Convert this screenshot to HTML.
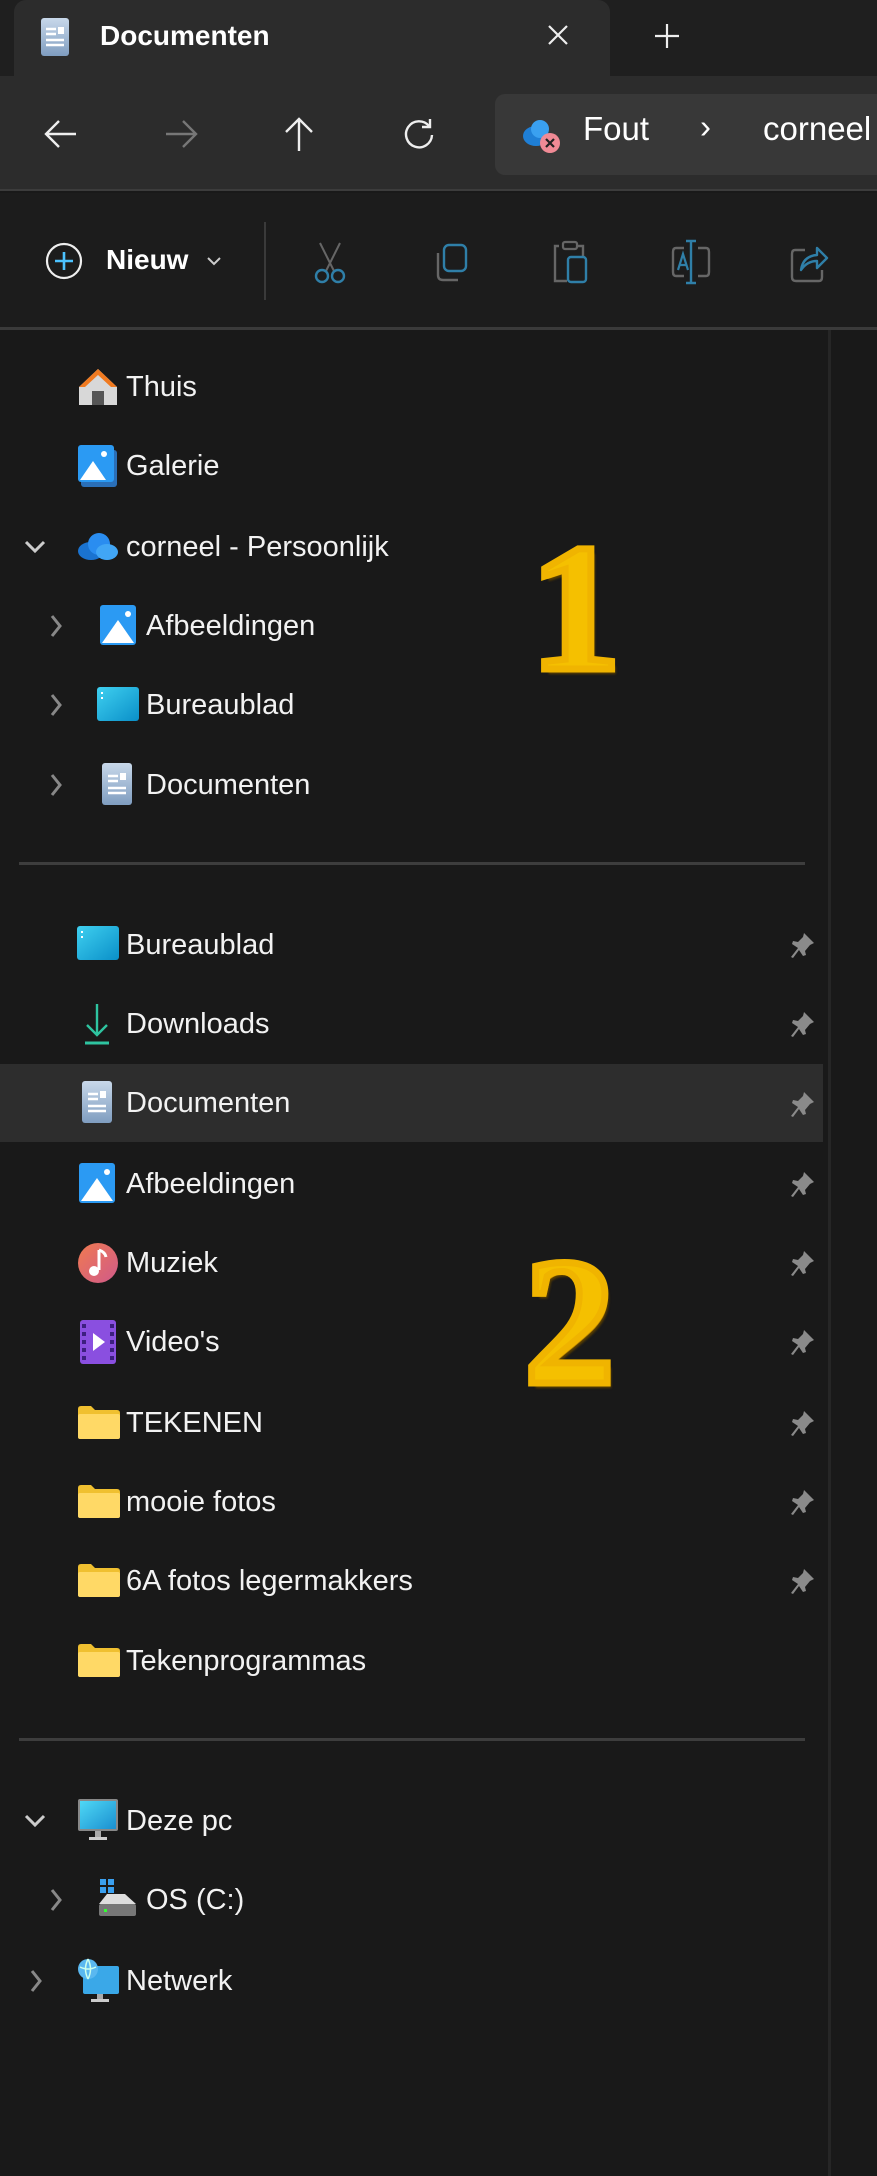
<!DOCTYPE html>
<html><head><meta charset="utf-8">
<style>
*{margin:0;padding:0;box-sizing:border-box}
html,body{width:877px;height:2176px;overflow:hidden;background:#191919;font-family:"Segoe UI","Liberation Sans",sans-serif;color:#fff}
.abs{position:absolute}
#tabbar{left:0;top:0;width:877px;height:76px;background:#1f1f1f}
#tab{left:14px;top:0;width:596px;height:80px;background:#2c2c2c;border-radius:12px 12px 0 0}
#nav{left:0;top:76px;width:877px;height:115px;background:#2c2c2c;border-bottom:2px solid #3c3c3c}
#addr{left:495px;top:18px;width:400px;height:81px;background:#383838;border-radius:10px}
#tool{left:0;top:193px;width:877px;height:137px;background:#1c1c1c;border-bottom:3px solid #3a3a3a}
.row{position:absolute;left:0;height:80px;width:823px;line-height:80px;font-size:29px;color:#f2f2f2}
.row span.t{position:absolute;top:0}
.row svg{position:absolute}
.pin{position:absolute;left:790px;top:26px}
.chev{position:absolute;top:28px}
.sep{position:absolute;left:19px;width:786px;height:3px;background:#3d3d3d}
.big{position:absolute;font-family:"Liberation Serif",serif;font-weight:bold;color:#f5c000;-webkit-text-stroke:7px #f0b400;
text-shadow:-2px -2px 0 #ffe070,3px 3px 0 #b88400,4px 5px 2px #5a3f00}
</style></head><body>
<div id="tabbar" class="abs"></div>
<div id="tab" class="abs">
 <svg class="abs" style="left:26px;top:17px" width="30" height="40" viewBox="0 0 30 40"><defs><linearGradient id="g1" x1="0" y1="0" x2="0" y2="1"><stop offset="0" stop-color="#c8d8ea"/><stop offset="1" stop-color="#7f9dc0"/></linearGradient></defs><rect x="1" y="1" width="28" height="38" rx="3" fill="url(#g1)"/><path d="M6 12h10M6 17h10M6 23h18M6 28h18" stroke="#fff" stroke-width="2.5"/><rect x="18" y="10" width="6" height="7" fill="#fff"/></svg>
 <span class="abs" style="left:86px;top:20px;font-size:28px;font-weight:600;color:#fff">Documenten</span>
 <svg class="abs" style="left:533px;top:24px" width="22" height="22"><path d="M2 2L20 20M20 2L2 20" stroke="#eee" stroke-width="2.2"/></svg>
</div>
<svg class="abs" style="left:654px;top:23px" width="26" height="26"><path d="M13 1V25M1 13H25" stroke="#eee" stroke-width="2.2"/></svg>
<div id="nav" class="abs">
 <svg class="abs" style="left:44px;top:43px" width="34" height="30"><path d="M32 15H3M15 2L2 15L15 28" stroke="#eee" stroke-width="2.4" fill="none"/></svg>
 <svg class="abs" style="left:164px;top:43px" width="34" height="30"><path d="M2 15H31M19 2L32 15L19 28" stroke="#777" stroke-width="2.4" fill="none"/></svg>
 <svg class="abs" style="left:284px;top:40px" width="30" height="36"><path d="M15 35V3M2 16L15 3L28 16" stroke="#eee" stroke-width="2.4" fill="none"/></svg>
 <svg class="abs" style="left:402px;top:41px" width="34" height="34"><path d="M27 9A13 13 0 1 0 30 18" stroke="#eee" stroke-width="2.4" fill="none"/><path d="M28 2V10H20" stroke="#eee" stroke-width="2.4" fill="none"/></svg>
 <div id="addr" class="abs">
  <svg class="abs" style="left:25px;top:22px" width="44" height="40"><ellipse cx="16" cy="20" rx="13" ry="10" fill="#1f7fd6"/><circle cx="20" cy="13" r="9" fill="#3aa0f0"/><circle cx="30" cy="27" r="10" fill="#f08a95"/><path d="M26 23L34 31M34 23L26 31" stroke="#222" stroke-width="2.2"/></svg>
  <span class="abs" style="left:88px;top:16px;font-size:33px;color:#fff">Fout</span>
  <span class="abs" style="left:205px;top:14px;font-size:33px;color:#fff">›</span>
  <span class="abs" style="left:268px;top:16px;font-size:33px;color:#fff">corneel</span>
 </div>
</div>
<div id="tool" class="abs">
 <svg class="abs" style="left:45px;top:49px" width="38" height="38"><circle cx="19" cy="19" r="17" stroke="#eee" stroke-width="2.2" fill="none"/><path d="M19 10V28M10 19H28" stroke="#4cc2ff" stroke-width="2.6"/></svg>
 <span class="abs" style="left:106px;top:51px;font-size:28px;font-weight:600;color:#fff">Nieuw</span>
 <svg class="abs" style="left:206px;top:63px" width="16" height="10"><path d="M2 2L8 8L14 2" stroke="#ccc" stroke-width="2" fill="none"/></svg>
 <div class="abs" style="left:264px;top:29px;width:2px;height:78px;background:#3a3a3a"></div>
 <svg class="abs" style="left:312px;top:48px" width="36" height="44"><path d="M8 2L22 30M28 2L14 30" stroke="#666" stroke-width="2"/><circle cx="10" cy="35" r="6" stroke="#2f7fa8" stroke-width="2.4" fill="none"/><circle cx="26" cy="35" r="6" stroke="#2f7fa8" stroke-width="2.4" fill="none"/></svg>
 <svg class="abs" style="left:432px;top:50px" width="38" height="40"><rect x="12" y="2" width="22" height="26" rx="5" stroke="#2f7fa8" stroke-width="2.4" fill="none"/><path d="M6 10V32Q6 37 11 37H26" stroke="#666" stroke-width="2.4" fill="none"/></svg>
 <svg class="abs" style="left:551px;top:46px" width="38" height="46"><path d="M8 7H4V42H16" stroke="#666" stroke-width="2.4" fill="none"/><rect x="12" y="3" width="14" height="7" rx="2" stroke="#666" stroke-width="2.2" fill="none"/><path d="M26 7H32V17" stroke="#666" stroke-width="2.4" fill="none"/><rect x="17" y="18" width="18" height="25" rx="3" stroke="#2f7fa8" stroke-width="2.4" fill="none"/></svg>
 <svg class="abs" style="left:670px;top:46px" width="42" height="46"><path d="M14 9H6Q3 9 3 13V33Q3 37 6 37H14M28 9H36Q39 9 39 13V33Q39 37 36 37H28" stroke="#666" stroke-width="2.4" fill="none"/><path d="M21 2V44M16 2H26M16 44H26" stroke="#2f7fa8" stroke-width="2.4"/><path d="M8 31L13 15L18 31M10 26H16" stroke="#2f7fa8" stroke-width="2.2" fill="none"/></svg>
 <svg class="abs" style="left:789px;top:47px" width="40" height="44"><path d="M16 10H6Q3 10 3 14V37Q3 41 7 41H30Q33 41 33 37V30" stroke="#666" stroke-width="2.4" fill="none"/><path d="M12 30Q14 16 28 15V8L38 18L28 28V21Q18 21 12 30Z" stroke="#2f7fa8" stroke-width="2.4" fill="none" stroke-linejoin="round"/></svg>
</div>
<div class="abs" style="left:828px;top:330px;width:3px;height:1846px;background:#262626"></div>

<div class="row" style="top:347px">
 <svg style="left:77px;top:20px" width="42" height="40" viewBox="0 0 42 40"><path d="M21 2L2 20V38H40V20Z" fill="#d8d8d8"/><path d="M21 2L2 20H8L21 8L34 20H40Z" fill="#f07a20"/><rect x="15" y="24" width="12" height="14" fill="#555"/></svg>
 <span class="t" style="left:126px">Thuis</span></div>
<div class="row" style="top:426px">
 <svg style="left:78px;top:19px" width="40" height="44"><rect x="3" y="5" width="36" height="37" rx="3" fill="#2a6fb8"/><rect x="0" y="0" width="36" height="37" rx="3" fill="#2b9af3"/><path d="M2 35L15 16L28 35Z" fill="#fff"/><circle cx="26" cy="9" r="3" fill="#fff"/></svg>
 <span class="t" style="left:126px">Galerie</span></div>
<div class="row" style="top:507px">
 <svg class="chev" style="left:24px;top:33px" width="22" height="14"><path d="M2 2L11 11L20 2" stroke="#ccc" stroke-width="3" fill="none"/></svg>
 <svg style="left:77px;top:24px" width="42" height="30"><ellipse cx="14" cy="20" rx="13" ry="9" fill="#1a73d0"/><circle cx="22" cy="13" r="11" fill="#2a8df0"/><ellipse cx="30" cy="21" rx="11" ry="8" fill="#41a6f5"/></svg>
 <span class="t" style="left:126px">corneel - Persoonlijk</span></div>
<div class="row" style="top:586px">
 <svg class="chev" style="left:50px;top:28px" width="12" height="24"><path d="M2 2L10 12L2 22" stroke="#888" stroke-width="3" fill="none"/></svg>
 <svg style="left:100px;top:19px" width="36" height="40"><rect x="0" y="0" width="36" height="40" rx="3" fill="#2b9af3"/><path d="M2 38L18 15L34 38Z" fill="#fff"/><circle cx="28" cy="9" r="3" fill="#fff"/></svg>
 <span class="t" style="left:146px">Afbeeldingen</span></div>
<div class="row" style="top:665px">
 <svg class="chev" style="left:50px;top:28px" width="12" height="24"><path d="M2 2L10 12L2 22" stroke="#888" stroke-width="3" fill="none"/></svg>
 <svg style="left:97px;top:22px" width="42" height="36"><defs><linearGradient id="d1" x1="0" y1="0" x2="1" y2="1"><stop offset="0" stop-color="#3fd0f0"/><stop offset="1" stop-color="#0a8fc8"/></linearGradient></defs><rect x="0" y="0" width="42" height="34" rx="3" fill="url(#d1)"/><rect x="4" y="5" width="2" height="2" fill="#fff"/><rect x="4" y="10" width="2" height="2" fill="#fff"/></svg>
 <span class="t" style="left:146px">Bureaublad</span></div>
<div class="row" style="top:745px">
 <svg class="chev" style="left:50px;top:28px" width="12" height="24"><path d="M2 2L10 12L2 22" stroke="#888" stroke-width="3" fill="none"/></svg>
 <svg style="left:102px;top:18px" width="30" height="42"><defs><linearGradient id="p1" x1="0" y1="0" x2="0" y2="1"><stop offset="0" stop-color="#c8d8ea"/><stop offset="1" stop-color="#7f9dc0"/></linearGradient></defs><rect x="0" y="0" width="30" height="42" rx="3" fill="url(#p1)"/><path d="M6 13h10M6 18h10M6 25h18M6 30h18" stroke="#fff" stroke-width="2.4"/><rect x="18" y="10" width="6" height="7" fill="#fff"/></svg>
 <span class="t" style="left:146px">Documenten</span></div>
<div class="sep" style="top:862px"></div>

<div class="big" style="left:530px;top:518px;font-size:182px;line-height:182px">1</div>

<svg width="0" height="0" style="position:absolute"><defs>
<g id="pin"><path d="M14 2L24 12L20 14L15 20L16 24L13 25L9 19L3 27L1 26L8 17L2 13L3 10L8 11L13 6Z" fill="#8a8a8a"/></g>
<g id="fold"><path d="M0 4Q0 1 3 1H13L17 5H39Q42 5 42 8V31Q42 34 39 34H3Q0 34 0 31Z" fill="#f0c030"/><rect x="0" y="9" width="42" height="25" rx="2" fill="#ffd966"/></g>
</defs></svg>

<div class="row" style="top:905px">
 <svg style="left:77px;top:21px" width="42" height="38"><rect x="0" y="0" width="42" height="34" rx="3" fill="url(#d1)"/><rect x="4" y="5" width="2" height="2" fill="#fff"/><rect x="4" y="10" width="2" height="2" fill="#fff"/></svg>
 <span class="t" style="left:126px">Bureaublad</span><svg class="pin" width="28" height="28"><use href="#pin"/></svg></div>
<div class="row" style="top:984px">
 <svg style="left:82px;top:18px" width="30" height="44"><path d="M15 2V33M5 23L15 33L25 23" stroke="#2ec4a0" stroke-width="2.4" fill="none"/><path d="M3 41H27" stroke="#2ec4a0" stroke-width="3"/></svg>
 <span class="t" style="left:126px">Downloads</span><svg class="pin" width="28" height="28"><use href="#pin"/></svg></div>
<div class="row" style="top:1064px;height:78px;line-height:78px;background:#2d2d2d">
 <svg style="left:82px;top:17px" width="30" height="42"><rect x="0" y="0" width="30" height="42" rx="3" fill="url(#p1)"/><path d="M6 13h10M6 18h10M6 25h18M6 30h18" stroke="#fff" stroke-width="2.4"/><rect x="18" y="10" width="6" height="7" fill="#fff"/></svg>
 <span class="t" style="left:126px">Documenten</span><svg class="pin" width="28" height="28"><use href="#pin"/></svg></div>
<div class="row" style="top:1144px">
 <svg style="left:79px;top:19px" width="36" height="40"><rect x="0" y="0" width="36" height="40" rx="3" fill="#2b9af3"/><path d="M2 38L18 15L34 38Z" fill="#fff"/><circle cx="28" cy="9" r="3" fill="#fff"/></svg>
 <span class="t" style="left:126px">Afbeeldingen</span><svg class="pin" width="28" height="28"><use href="#pin"/></svg></div>
<div class="row" style="top:1223px">
 <svg style="left:77px;top:19px" width="42" height="42"><defs><linearGradient id="m1" x1="0" y1="0" x2="1" y2="1"><stop offset="0" stop-color="#f07a50"/><stop offset="1" stop-color="#d05a8a"/></linearGradient></defs><circle cx="21" cy="21" r="20" fill="url(#m1)"/><path d="M22 8V28" stroke="#fff" stroke-width="3"/><path d="M22 8Q28 10 29 15" stroke="#fff" stroke-width="3" fill="none"/><circle cx="17" cy="29" r="5" fill="#fff"/></svg>
 <span class="t" style="left:126px">Muziek</span><svg class="pin" width="28" height="28"><use href="#pin"/></svg></div>
<div class="row" style="top:1302px">
 <svg style="left:80px;top:18px" width="36" height="44"><rect x="0" y="0" width="36" height="44" rx="3" fill="#8a4fe0"/><g fill="#3d1f80"><rect x="2" y="4" width="4" height="4"/><rect x="2" y="12" width="4" height="4"/><rect x="2" y="20" width="4" height="4"/><rect x="2" y="28" width="4" height="4"/><rect x="2" y="36" width="4" height="4"/><rect x="30" y="4" width="4" height="4"/><rect x="30" y="12" width="4" height="4"/><rect x="30" y="20" width="4" height="4"/><rect x="30" y="28" width="4" height="4"/><rect x="30" y="36" width="4" height="4"/></g><path d="M13 13L25 22L13 31Z" fill="#fff"/></svg>
 <span class="t" style="left:126px">Video's</span><svg class="pin" width="28" height="28"><use href="#pin"/></svg></div>
<div class="row" style="top:1383px">
 <svg style="left:78px;top:22px" width="42" height="36"><use href="#fold"/></svg>
 <span class="t" style="left:126px">TEKENEN</span><svg class="pin" width="28" height="28"><use href="#pin"/></svg></div>
<div class="row" style="top:1462px">
 <svg style="left:78px;top:22px" width="42" height="36"><use href="#fold"/></svg>
 <span class="t" style="left:126px">mooie fotos</span><svg class="pin" width="28" height="28"><use href="#pin"/></svg></div>
<div class="row" style="top:1541px">
 <svg style="left:78px;top:22px" width="42" height="36"><use href="#fold"/></svg>
 <span class="t" style="left:126px">6A fotos legermakkers</span><svg class="pin" width="28" height="28"><use href="#pin"/></svg></div>
<div class="row" style="top:1621px">
 <svg style="left:78px;top:22px" width="42" height="36"><use href="#fold"/></svg>
 <span class="t" style="left:126px">Tekenprogrammas</span></div>
<div class="sep" style="top:1738px"></div>

<div class="big" style="left:524px;top:1232px;font-size:182px;line-height:182px">2</div>

<div class="row" style="top:1781px">
 <svg class="chev" style="left:24px;top:33px" width="22" height="14"><path d="M2 2L11 11L20 2" stroke="#ccc" stroke-width="3" fill="none"/></svg>
 <svg style="left:78px;top:18px" width="40" height="44"><defs><linearGradient id="s1" x1="0" y1="0" x2="1" y2="1"><stop offset="0" stop-color="#4fd8f5"/><stop offset="1" stop-color="#1a8fd0"/></linearGradient></defs><rect x="0" y="0" width="40" height="32" rx="2" fill="#888"/><rect x="2" y="2" width="36" height="28" fill="url(#s1)"/><rect x="17" y="32" width="6" height="6" fill="#aaa"/><rect x="11" y="38" width="18" height="3" fill="#ccc"/></svg>
 <span class="t" style="left:126px">Deze pc</span></div>
<div class="row" style="top:1860px">
 <svg class="chev" style="left:50px;top:28px" width="12" height="24"><path d="M2 2L10 12L2 22" stroke="#888" stroke-width="3" fill="none"/></svg>
 <svg style="left:99px;top:18px" width="38" height="42"><rect x="1" y="1" width="6" height="6" fill="#3aa0f0"/><rect x="9" y="1" width="6" height="6" fill="#3aa0f0"/><rect x="1" y="9" width="6" height="6" fill="#3aa0f0"/><rect x="9" y="9" width="6" height="6" fill="#3aa0f0"/><path d="M0 26L8 16H26L37 26Z" fill="#ddd"/><rect x="0" y="26" width="37" height="12" rx="2" fill="#777"/><rect x="5" y="31" width="3" height="3" fill="#3f3"/></svg>
 <span class="t" style="left:146px">OS (C:)</span></div>
<div class="row" style="top:1941px">
 <svg class="chev" style="left:30px;top:28px" width="12" height="24"><path d="M2 2L10 12L2 22" stroke="#888" stroke-width="3" fill="none"/></svg>
 <svg style="left:77px;top:17px" width="42" height="46"><rect x="6" y="8" width="36" height="28" rx="2" fill="#3aa8e8"/><rect x="20" y="36" width="6" height="5" fill="#aaa"/><rect x="14" y="41" width="18" height="3" fill="#ccc"/><circle cx="11" cy="11" r="10" fill="#5ab8f0"/><path d="M3 9Q11 13 19 9M11 1Q6 11 11 21M11 1Q16 11 11 21" stroke="#cfe" stroke-width="1.5" fill="none"/></svg>
 <span class="t" style="left:126px">Netwerk</span></div>
</body></html>
